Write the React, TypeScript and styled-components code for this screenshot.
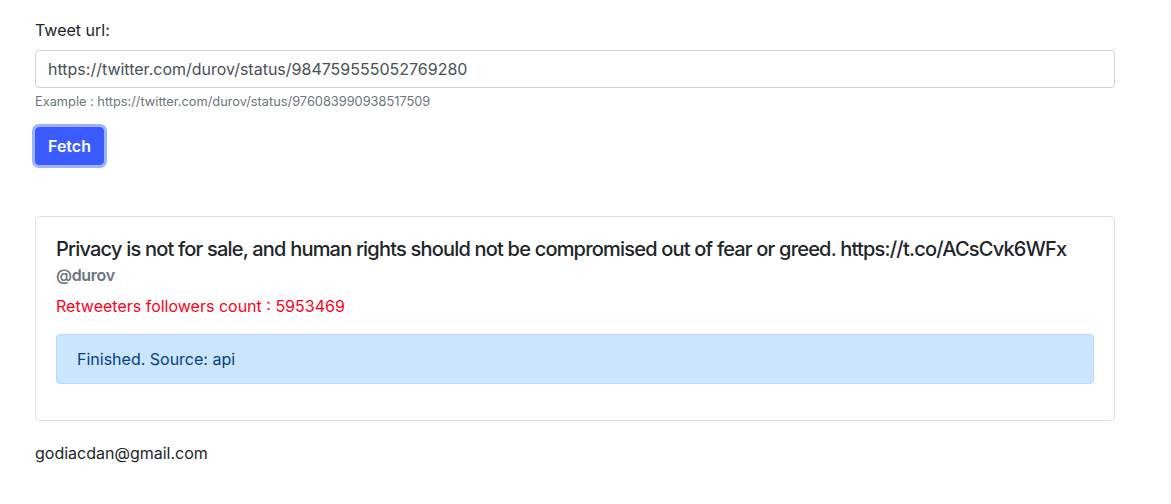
import React from "react";
import styled, { createGlobalStyle } from "styled-components";

const GlobalStyle = createGlobalStyle`
  * {
    box-sizing: border-box;
  }
  body {
    margin: 0;
    background: #fff;
    color: #212529;
    font-family: Inter, "Liberation Sans", sans-serif;
    font-size: 16px;
    line-height: 1.5;
  }
`;

const Page = styled.div`
  width: 1080px;
  margin-left: 35px;
  padding-top: 18px;
`;

const FormGroup = styled.div`
  display: flex;
  flex-direction: column;
  margin-bottom: 16px;
`;

const Label = styled.label`
  margin-bottom: 8px;
`;

const Input = styled.input`
  height: 38px;
  padding: 6px 12px;
  font: inherit;
  color: #495057;
  border: 1px solid #ced4da;
  border-radius: 4px;
  outline: none;
`;

const Hint = styled.small`
  margin-top: 4px;
  font-size: 12.8px;
  line-height: 19.2px;
  color: #6c757d;
`;

const FetchButton = styled.button`
  height: 38px;
  padding: 0 12px;
  font: inherit;
  font-weight: 600;
  color: #fff;
  background: #3a5bff;
  border: 1px solid #3a5bff;
  border-radius: 4px;
  box-shadow: 0 0 0 3px #9fb2ff;
  cursor: pointer;
`;

const Card = styled.div`
  margin-top: 51px;
  padding: 20px;
  border: 1px solid #dfdfdf;
  border-radius: 4px;
`;

const Title = styled.h5`
  margin: 0 0 5px;
  font-size: 20px;
  font-weight: 500;
  line-height: 24px;
  letter-spacing: -0.8px;
  white-space: nowrap;
`;

const Handle = styled.h6`
  margin: 0 0 9px;
  font-size: 16px;
  font-weight: 600;
  line-height: 19.2px;
  letter-spacing: -0.3px;
  color: #6c757d;
`;

const Count = styled.p`
  margin: 0 0 16px;
  color: #ff0019;
`;

const Alert = styled.div<{ $tone: "info" }>`
  padding: 12px 20px;
  margin-bottom: 16px;
  color: #004085;
  background: #cce5ff;
  border: 1px solid #b8daff;
  border-radius: 4px;
`;

const Footer = styled.p`
  margin: 20px 0 0;
`;

export default function App() {
  return (
    <>
      <GlobalStyle />
      <Page>
        <FormGroup>
          <Label htmlFor="tweet-url">Tweet url:</Label>
          <Input
            id="tweet-url"
            defaultValue="https://twitter.com/durov/status/984759555052769280"
          />
          <Hint>Example : https://twitter.com/durov/status/976083990938517509</Hint>
        </FormGroup>
        <FetchButton>Fetch</FetchButton>
        <Card>
          <Title>
            Privacy is not for sale, and human rights should not be compromised
            out of fear or greed. https://t.co/ACsCvk6WFx
          </Title>
          <Handle>@durov</Handle>
          <Count>Retweeters followers count : 5953469</Count>
          <Alert $tone="info">Finished. Source: api</Alert>
        </Card>
        <Footer>godiacdan@gmail.com</Footer>
      </Page>
    </>
  );
}
